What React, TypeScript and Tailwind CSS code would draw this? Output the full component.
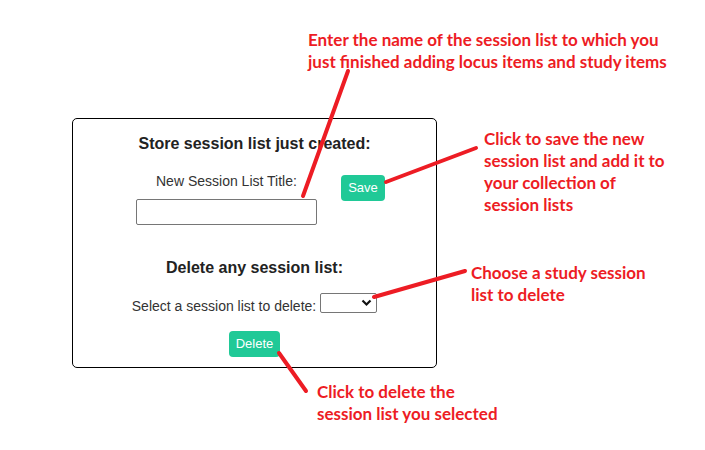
import React from 'react';

const noteCls =
  "absolute text-[17px] leading-[22px] font-bold text-[#ed1c24] font-['Lato',sans-serif] whitespace-nowrap";

export default function App() {
  const [title, setTitle] = React.useState('');

  return (
    <div className="relative w-[705px] h-[450px] bg-white overflow-hidden font-['Liberation_Sans',Arial,sans-serif]">
      <div className="pt-[118px] pl-[72px]">
        <div className="w-[365px] h-[250px] border border-black rounded-[5px] flex flex-col items-center pt-[16px]">
          <h2 className="text-[16px] leading-[18px] font-bold text-[#222]">Store session list just created:</h2>

          <div className="self-start flex items-start pl-[63px] mt-[20px]">
            <div className="flex flex-col items-start w-[181px]">
              <label className="ml-[20px] text-[14px] leading-4 text-[#333]">New Session List Title:</label>
              <input
                type="text"
                value={title}
                onChange={(e) => setTitle(e.target.value)}
                className="mt-[10px] w-[181px] h-[26px] border border-[#767676] rounded-[2px] px-1 text-[13px] outline-none"
              />
            </div>
            <button className="ml-[24px] mt-[2px] w-[44px] h-[26px] rounded-[4px] bg-[#20c997] text-white text-[13px]">
              Save
            </button>
          </div>

          <h2 className="mt-[34px] text-[16px] leading-[18px] font-bold text-[#222]">Delete any session list:</h2>

          <div className="mt-[16px] flex items-center gap-[4px]">
            <span className="text-[14px] leading-4 text-[#333]">Select a session list to delete:</span>
            <div className="relative">
              <select className="appearance-none w-[57px] h-[20px] border border-[#767676] rounded-[2px] bg-white outline-none" />
              <svg
                className="absolute right-[5px] top-[6px] pointer-events-none"
                width="11"
                height="8"
                viewBox="0 0 11 8"
              >
                <path d="M1.5 1.5 L5.5 5.5 L9.5 1.5" fill="none" stroke="#111" strokeWidth="2.2" />
              </svg>
            </div>
          </div>

          <button className="mt-[13px] w-[51px] h-[26px] rounded-[4px] bg-[#20c997] text-white text-[13px]">
            Delete
          </button>
        </div>
      </div>

      {/* annotation arrows */}
      <svg className="absolute left-0 top-0 pointer-events-none" width="705" height="450">
        <g stroke="#ed1c24" strokeWidth="4" strokeLinecap="round">
          <line x1="348" y1="71" x2="303" y2="196" />
          <line x1="386" y1="182" x2="476" y2="148" />
          <line x1="374" y1="297" x2="465" y2="271" />
          <line x1="279" y1="353" x2="306" y2="391" />
        </g>
      </svg>

      <div className={noteCls + ' left-[308px] top-[29px]'}>
        Enter the name of the session list to which you
        <br />
        just finished adding locus items and study items
      </div>
      <div className={noteCls + ' left-[484px] top-[128px]'}>
        Click to save the new
        <br />
        session list and add it to
        <br />
        your collection of
        <br />
        session lists
      </div>
      <div className={noteCls + ' left-[471px] top-[262px]'}>
        Choose a study session
        <br />
        list to delete
      </div>
      <div className={noteCls + ' left-[317px] top-[381px]'}>
        Click to delete the
        <br />
        session list you selected
      </div>
    </div>
  );
}
